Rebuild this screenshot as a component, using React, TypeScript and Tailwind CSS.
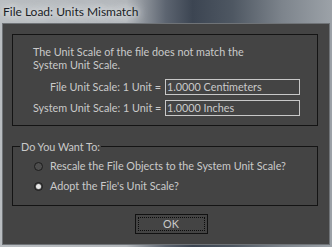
import React from "react";

function Radio({ checked }: { checked?: boolean }) {
  return (
    <span className="relative inline-block w-[9px] h-[9px] rounded-full border border-[#1c1c1c] bg-[#4e4e4e] shrink-0">
      {checked && (
        <span className="absolute left-[1px] top-[1px] w-[5px] h-[5px] rounded-full bg-[#e8e8e8]" />
      )}
    </span>
  );
}

export default function App() {
  const font = { fontFamily: 'Lato, "Noto Sans", sans-serif' };
  return (
    <div
      className="w-[332px] h-[247px] overflow-hidden flex flex-col"
      style={{
        background:
          "linear-gradient(90deg, #b9bdc1 0%, #b3b7bb 38%, #5c6470 50%, #3c4552 58%, #4e5762 70%, #7d848c 85%, #9ca2a8 100%)",
      }}
    >
      <div className="h-[23px] flex items-center pl-[3px] shrink-0">
        <span
          className="text-[12px] text-[#1a1e26] leading-none"
          style={{
            fontFamily: 'Lato, "Noto Sans", sans-serif',
            textShadow: "0 0 6px #e6e8ea, 0 0 10px #e6e8ea, 0 0 14px #dfe2e5",
          }}
        >
          File Load: Units Mismatch
        </span>
      </div>
      <div className="mx-[2px] h-[222px] bg-[#444444] border border-[#6f7377] flex flex-col pl-[9px] pr-[11px] pt-[10px] text-[#cacaca] text-[10.8px]" style={font}>
        <div className="h-[92px] border border-[#141414] pl-[20px] pt-[10px] flex flex-col">
          <div className="leading-[13px]">
            The Unit Scale of the file does not match the
            <br />
            System Unit Scale.
          </div>
          <div className="mt-[8px] flex items-center h-[16px]">
            <span className="w-[132px] text-right pr-[4px] whitespace-nowrap">File Unit Scale: 1 Unit =</span>
            <span className="w-[135px] h-[16px] border border-[#c8c8c8] flex items-center pl-[1px] leading-none whitespace-nowrap">1.0000 Centimeters</span>
          </div>
          <div className="mt-[5px] flex items-center h-[16px]">
            <span className="w-[132px] text-right pr-[4px] whitespace-nowrap">System Unit Scale: 1 Unit =</span>
            <span className="w-[135px] h-[16px] border border-[#c8c8c8] flex items-center pl-[1px] leading-none whitespace-nowrap">1.0000 Inches</span>
          </div>
        </div>
        <div className="relative mt-[20px] h-[60px] border border-[#141414] flex flex-col pl-[21px] pt-[13px] gap-[7px]">
          <span className="absolute left-[7px] top-[-8px] bg-[#444444] px-[1px] leading-[15px]">Do You Want To:</span>
          <div className="flex items-center gap-[7px] h-[13px]">
            <Radio />
            <span className="whitespace-nowrap">Rescale the File Objects to the System Unit Scale?</span>
          </div>
          <div className="flex items-center gap-[7px] h-[13px]">
            <Radio checked />
            <span className="whitespace-nowrap">Adopt the File's Unit Scale?</span>
          </div>
        </div>
        <div className="mt-[8px] flex justify-center pl-[12px]">
          <div className="w-[73px] h-[20px] border border-[#111111] p-[2px]">
            <div className="w-full h-full border border-dotted border-[#0c0c0c] flex items-center justify-center leading-none">
              OK
            </div>
          </div>
        </div>
      </div>
    </div>
  );
}
